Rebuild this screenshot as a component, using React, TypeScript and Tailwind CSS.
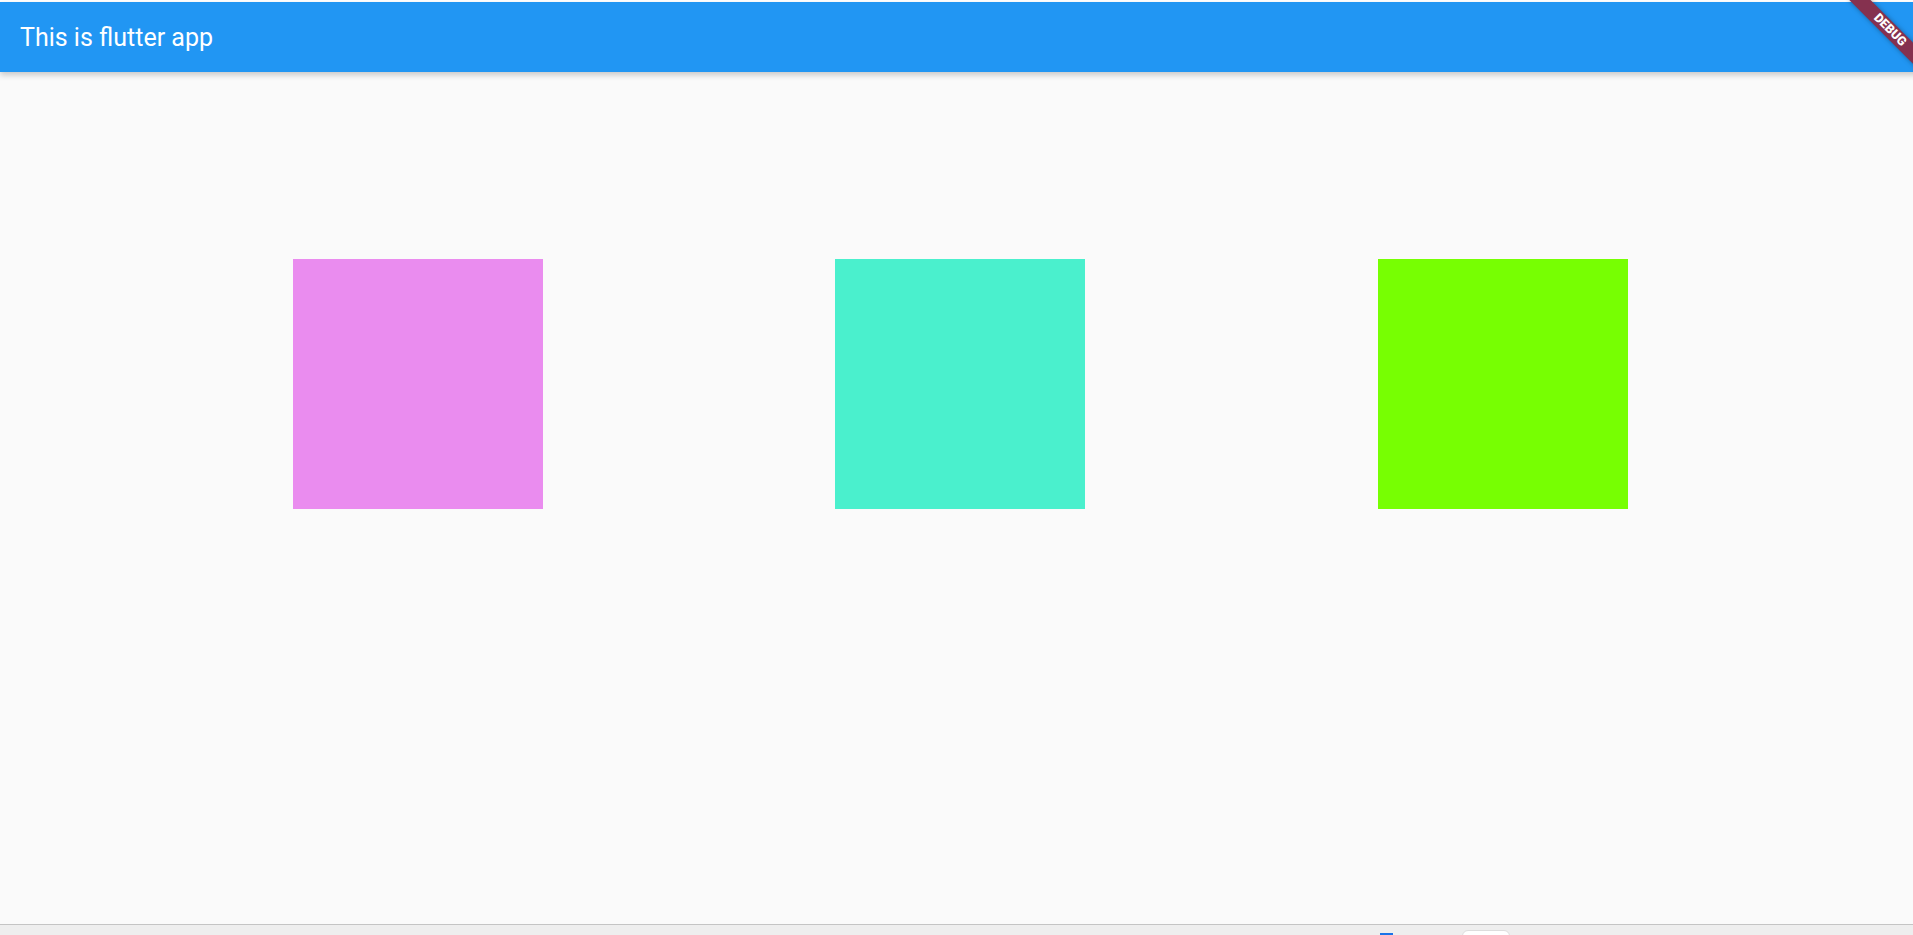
const boxes = [
  { name: "pink", color: "bg-[#ea8cef]" },
  { name: "teal", color: "bg-[#4af0cd]" },
  { name: "green", color: "bg-[#77ff02]" },
];

function DebugBanner() {
  return (
    <div className="absolute z-20 top-0 left-[1920px] w-0 h-0 rotate-45 origin-top-left">
      <div className="absolute left-[-50px] top-[35px] w-[100px] h-[15px] bg-[#85314f] shadow-[0_0_5px_rgba(0,0,0,0.35)] flex items-center justify-center">
        <span
          className="text-white text-[12.5px] font-black leading-none"
          style={{ fontFamily: "Roboto, sans-serif" }}
        >
          DEBUG
        </span>
      </div>
    </div>
  );
}

export default function App() {
  return (
    <div className="w-full h-[935px] overflow-hidden bg-[#eeeeee]">
      <div
        className="relative w-[1920px] h-[925px] flex flex-col bg-[#fafafa] border-b border-[#c4c4c4]"
        style={{ fontFamily: "Roboto, sans-serif" }}
      >
        <div className="h-[2px] bg-white" />
        {/* App bar */}
        <header className="relative z-10 h-[70px] bg-[#2196f3] flex items-center px-[20px] shadow-[0_3px_6px_rgba(0,0,0,0.2)]">
          <h1 className="text-white text-[25px] font-normal leading-none">
            This is flutter app
          </h1>
        </header>

        <main className="flex-1 pt-[187px]">
          <div className="flex justify-evenly">
            {boxes.map((b) => (
              <div key={b.name} className={`w-[250px] h-[250px] ${b.color}`} />
            ))}
          </div>
        </main>

        <DebugBanner />
      </div>
      <div className="relative h-[10px]">
        <div className="absolute left-[1380px] top-[8px] w-[13px] h-[2px] bg-[#1a73e8]" />
        <div className="absolute left-[1462px] top-[5px] w-[48px] h-[10px] rounded-t-[6px] bg-white border border-[#dddddd]" />
      </div>
    </div>
  );
}
